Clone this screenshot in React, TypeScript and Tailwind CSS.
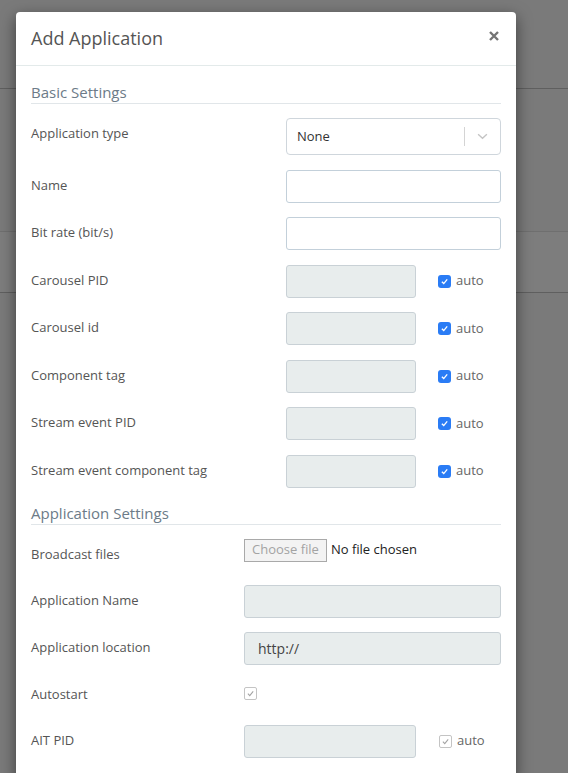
import React from "react";

const font = { fontFamily: '"Open Sans", "Liberation Sans", sans-serif' };

function Check({ disabled }: { disabled?: boolean }) {
  if (disabled) {
    return (
      <span className="flex h-[13px] w-[13px] items-center justify-center rounded-[2px] border border-[#c4c4c4] bg-white">
        <svg viewBox="0 0 12 12" className="h-[9px] w-[9px]" fill="none" stroke="#a3a3a3" strokeWidth="1.4">
          <path d="M2.5 6.3 L5 8.8 L9.6 3.2" />
        </svg>
      </span>
    );
  }
  return (
    <span className="flex h-[13px] w-[13px] items-center justify-center rounded-[3px] bg-[#2a7cf5]">
      <svg viewBox="0 0 12 12" className="h-[9px] w-[9px]" fill="none" stroke="#ffffff" strokeWidth="1.8">
        <path d="M2.5 6.3 L5 8.8 L9.6 3.2" />
      </svg>
    </span>
  );
}

function SectionTitle({ children }: { children: React.ReactNode }) {
  return (
    <div className="h-[23px] border-b border-[#e1e6e9] text-[15px] leading-[22px] text-[#6c7b88]">{children}</div>
  );
}

function Label({ children }: { children: React.ReactNode }) {
  return <div className="pt-[6px] text-[13px] leading-[18px] text-[#555]">{children}</div>;
}

function TextInput({ disabled, value, w }: { disabled?: boolean; value?: string; w: string }) {
  return (
    <div
      className={
        "flex h-[33px] items-center rounded-[3px] border pl-[13px] text-[14px] text-[#444] " +
        w +
        (disabled ? " border-[#c9d1d6] bg-[#e8eded]" : " border-[#c3d0da] bg-white")
      }
    >
      {value}
    </div>
  );
}

function AutoRow({ label, labelW, inputW }: { label: string; labelW: string; inputW: string }) {
  return (
    <div className="flex items-start">
      <div className={labelW}>
        <Label>{label}</Label>
      </div>
      <TextInput disabled w={inputW} />
      <div className="ml-[22px] flex h-[33px] items-center gap-[5px] text-[13px] text-[#666]">
        <Check />
        <span>auto</span>
      </div>
    </div>
  );
}

export default function App() {
  const basicAuto = ["Carousel PID", "Carousel id", "Component tag", "Stream event PID", "Stream event component tag"];

  return (
    <div className="relative h-[773px] w-full overflow-hidden bg-[#7a7a7a]" style={font}>
      {/* dimmed page behind the dialog */}
      <div className="h-[89px] border-b border-[#5f5f5f]" />
      <div className="h-[143px] border-b border-[#6f6f6f]" />
      <div className="h-[61px] border-b border-[#5f5f5f] bg-[#7d7d7d]" />

      <div className="absolute left-[16px] top-[12px] w-[500px] rounded-[4px] bg-white shadow-[0_5px_15px_rgba(0,0,0,0.5)]">
        <div className="flex h-[54px] items-center justify-between border-b border-[#e3eaea] px-[15px]">
          <span className="text-[18px] text-[#555]">Add Application</span>
          <svg viewBox="0 0 10 10" className="mr-[2px] mb-[6px] h-[10px] w-[10px]" stroke="#747474" strokeWidth="2.4">
            <path d="M1 1 L9 9 M9 1 L1 9" />
          </svg>
        </div>

        <div className="px-[15px] pt-[15px] pb-[20px]">
          <SectionTitle>Basic Settings</SectionTitle>

          <div className="mt-[14px] flex flex-col gap-y-[14.5px]">
            <div className="flex items-start">
              <div className="w-[255px]">
                <Label>Application type</Label>
              </div>
              <div className="flex h-[37px] w-[215px] items-center rounded-[4px] border border-[#cfd6dc] bg-white">
                <span className="flex-1 pl-[10px] text-[13px] text-[#333]">None</span>
                <span className="h-[19px] w-px bg-[#d4d4d4]" />
                <svg viewBox="0 0 12 8" className="mx-[12px] h-[7px] w-[11px]" fill="none" stroke="#c4c4c4" strokeWidth="1.6">
                  <path d="M1 1.5 L6 6 L11 1.5" />
                </svg>
              </div>
            </div>
            <div className="flex items-start">
              <div className="w-[255px]">
                <Label>Name</Label>
              </div>
              <TextInput w="w-[215px]" />
            </div>
            <div className="flex items-start">
              <div className="w-[255px]">
                <Label>Bit rate (bit/s)</Label>
              </div>
              <TextInput w="w-[215px]" />
            </div>
            {basicAuto.map((l) => (
              <AutoRow key={l} label={l} labelW="w-[255px]" inputW="w-[130px]" />
            ))}
          </div>

          <div className="mt-[14px]">
            <SectionTitle>Application Settings</SectionTitle>
          </div>

          <div className="mt-[14px] flex flex-col gap-y-[14px]">
            <div className="flex h-[32px] items-start">
              <div className="w-[213px]">
                <Label>Broadcast files</Label>
              </div>
              <div className="flex items-center gap-[4px]">
                <span className="flex h-[23px] items-center border border-[#a9a9a9] bg-[#f3f3f3] px-[7px] text-[13px] text-[#a3a3a3]">
                  Choose file
                </span>
                <span className="text-[13px] text-[#222]">No file chosen</span>
              </div>
            </div>
            <div className="flex items-start">
              <div className="w-[213px]">
                <Label>Application Name</Label>
              </div>
              <TextInput disabled w="w-[257px]" />
            </div>
            <div className="flex items-start">
              <div className="w-[213px]">
                <Label>Application location</Label>
              </div>
              <TextInput disabled w="w-[257px]" value="http://" />
            </div>
            <div className="flex h-[32px] items-start">
              <div className="w-[213px]">
                <Label>Autostart</Label>
              </div>
              <div className="pt-[8px]">
                <Check disabled />
              </div>
            </div>
            <div className="flex items-start">
              <div className="w-[213px]">
                <Label>AIT PID</Label>
              </div>
              <TextInput disabled w="w-[172px]" />
              <div className="ml-[23px] flex h-[33px] items-center gap-[5px] text-[13px] text-[#666]">
                <Check disabled />
                <span>auto</span>
              </div>
            </div>
          </div>
        </div>
      </div>
    </div>
  );
}
